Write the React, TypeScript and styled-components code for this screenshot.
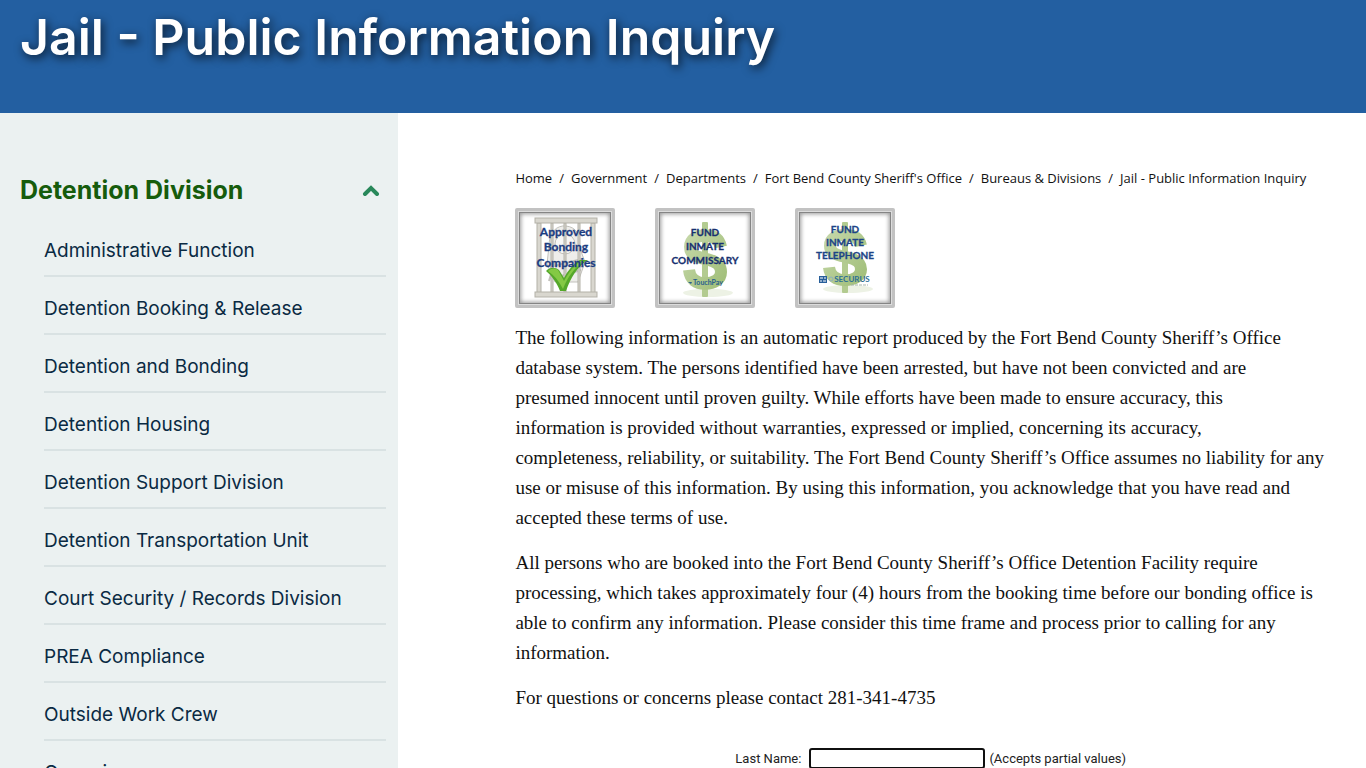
import React, { Fragment, useId } from "react";
import styled, { createGlobalStyle } from "styled-components";

const display = `Inter, "Open Sans", sans-serif`;

const GlobalStyle = createGlobalStyle`
  * { box-sizing: border-box; }
  html { scrollbar-width: none; }
  body { margin: 0; background: #fff; color: #111; font-family: ${display}; }
`;

const Banner = styled.header`
  background: #235fa1;
  padding: 0 20px 39px;
`;

const Title = styled.h1`
  margin: 0;
  color: #fff;
  font-size: 50px;
  line-height: 74px;
  font-weight: 600;
  text-shadow: 2px 3px 10px rgba(0, 0, 0, 0.75);
`;

const Columns = styled.div`
  display: grid;
  grid-template-columns: minmax(0, 7fr) minmax(0, 17fr);
`;

const Sidebar = styled.nav`
  background: #ebf1f1;
  padding: 60px 12px 40px 20px;
`;

const Toggle = styled.button`
  display: flex;
  width: 100%;
  justify-content: space-between;
  align-items: center;
  padding: 0 6px 0 0;
  border: 0;
  background: none;
  color: #165c0c;
  font: 700 25px/34px ${display};
  text-align: left;
`;

const NavList = styled.ul`
  list-style: none;
  margin: 12px 0 0;
  padding: 0 0 0 24px;
`;

const NavItem = styled.li`
  padding: 17px 0 9px;
  border-bottom: 2px solid #d9e2e3;
`;

const NavLink = styled.a`
  display: block;
  color: #0a2a43;
  font-size: 19px;
  line-height: 30px;
  text-decoration: none;
`;

const Main = styled.main`
  padding: 55px 20px 40px 117px;
`;

const Crumbs = styled.ol`
  display: flex;
  flex-wrap: wrap;
  list-style: none;
  margin: 0;
  padding: 0;
  font: 13px/20px "Open Sans", sans-serif;
`;

const Crumb = styled.li`
  & + &::before { content: "/"; margin: 0 7px; }
`;

const CrumbLink = styled.a`
  color: #111;
  text-decoration: none;
`;

const Badges = styled.div`
  display: flex;
  gap: 40px;
  margin: 20px 0 15px;
`;

const BadgeLink = styled.a`
  display: block;
  width: 100px;
  height: 100px;
  padding: 2px;
  border: 3px solid #c2c2c2;
  border-radius: 2px;
  background: #dcdcdc;
`;

const BadgeFace = styled.svg`
  display: block;
  width: 90px;
  height: 90px;
  background: #fff;
  outline: 1px solid #858585;
  box-shadow: inset 0 0 4px 1px #999;
  font-family: Lato, sans-serif;
  font-weight: 700;
  text-anchor: middle;
`;

const Copy = styled.p`
  margin: 0 0 15px;
  color: #111;
  font: 19px/30px "Liberation Serif", serif;
`;

const Search = styled.form`
  display: flex;
  justify-content: center;
  align-items: center;
  margin-top: 35px;
  color: #222;
  font: 13px/20px Roboto, sans-serif;
`;

const Field = styled.input`
  width: 176px;
  height: 21px;
  margin: 0 4px 0 8px;
  border: 2px solid #101010;
  border-radius: 3px;
  outline: 0;
  background: #fff;
`;

const navItems = [
  "Administrative Function",
  "Detention Booking & Release",
  "Detention and Bonding",
  "Detention Housing",
  "Detention Support Division",
  "Detention Transportation Unit",
  "Court Security / Records Division",
  "PREA Compliance",
  "Outside Work Crew",
  "Commissary",
];

const crumbs = [
  "Home",
  "Government",
  "Departments",
  "Fort Bend County Sheriff's Office",
  "Bureaus & Divisions",
  "Jail - Public Information Inquiry",
];

const paragraphs = [
  [
    "The following information is an automatic report produced by the Fort Bend County Sheriff’s Office",
    "database system. The persons identified have been arrested, but have not been convicted and are",
    "presumed innocent until proven guilty. While efforts have been made to ensure accuracy, this",
    "information is provided without warranties, expressed or implied, concerning its accuracy,",
    "completeness, reliability, or suitability. The Fort Bend County Sheriff’s Office assumes no liability for any",
    "use or misuse of this information. By using this information, you acknowledge that you have read and",
    "accepted these terms of use.",
  ],
  [
    "All persons who are booked into the Fort Bend County Sheriff’s Office Detention Facility require",
    "processing, which takes approximately four (4) hours from the booking time before our bonding office is",
    "able to confirm any information. Please consider this time frame and process prior to calling for any",
    "information.",
  ],
  ["For questions or concerns please contact 281-341-4735"],
];

function Dollar({ top, bottom }: { top: number; bottom: number }) {
  const id = useId();
  const h = bottom - top;
  return (
    <g transform={`translate(45 ${top}) scale(1 ${h / 72})`}>
      <defs>
        <linearGradient id={id} x1="0" y1="0" x2="1" y2="1">
          <stop offset="0" stopColor="#c3d6a6" />
          <stop offset="1" stopColor="#a3c07c" />
        </linearGradient>
      </defs>
      <ellipse cx="3" cy="68" rx="25" ry="4" fill="#edf2e5" />
      <rect x="-3" y="0" width="6" height="72" rx="1" fill="#b3cb90" />
      <path
        d="M16 24C14 15 7 13 0 13C-9 13-15 17-15 24C-15 33-5 34 3 36C11 38 16 41 16 48C16 55 9 59 0 59C-9 59-15 55-16 46"
        fill="none"
        stroke={`url(#${id})`}
        strokeWidth="12"
      />
    </g>
  );
}

function BondingArt() {
  return (
    <BadgeFace viewBox="0 0 90 90" role="img" aria-label="Approved Bonding Companies">
      <g fill="#eeeeeb" stroke="#c2c1bb">
        <path d="M29 33c0-14 8-21 17-20 10 1 15 9 13 20l6 16-7 20H35l-8-18z" />
        <circle cx="45" cy="31" r="10" fill="#f7f7f5" />
        <path d="M30 54l32-8M31 66l30-9M35 48l-6 20" fill="none" strokeWidth="2" />
      </g>
      <g fill="#d9d7cf" stroke="#b3b1a8">
        <rect x="17" y="10" width="4" height="70" />
        <rect x="31" y="10" width="2" height="70" />
        <rect x="44" y="10" width="2" height="70" />
        <rect x="58" y="10" width="2" height="70" />
        <rect x="71" y="10" width="4" height="70" />
        <rect x="15" y="5" width="62" height="5" />
        <rect x="15" y="79" width="62" height="5" />
      </g>
      <path d="M26 58c4-4 9-4 13-1l5 8c5-9 10-15 16-18h8C57 54 51 64 46 78h-6C37 70 32 63 26 58z" fill="#55a82a" />
      <path d="M28 58c4-3 7-3 10-1l6 11c5-9 10-16 17-20h4C55 54 48 63 43 76 39 68 34 62 28 58z" fill="#84c944" />
      <g fill="#1c3c80" stroke="#1c3c80" strokeWidth=".3" fontSize="12">
        <text x="46" y="23">Approved</text>
        <text x="46" y="38">Bonding</text>
        <text x="46" y="54">Companies</text>
      </g>
    </BadgeFace>
  );
}

function CommissaryArt() {
  return (
    <BadgeFace viewBox="0 0 90 90" role="img" aria-label="Fund Inmate Commissary, TouchPay">
      <Dollar top={9} bottom={84} />
      <g fill="#17306f" stroke="#17306f" strokeWidth=".3" fontSize="10">
        <text x="45" y="23">FUND</text>
        <text x="45" y="37">INMATE</text>
        <text x="45" y="51">COMMISSARY</text>
      </g>
      <text x="48" y="72" fill="#285f8d" fontSize="7">TouchPay</text>
      <path d="M28 69h4l-1 2z" fill="#285f8d" />
    </BadgeFace>
  );
}

function TelephoneArt() {
  return (
    <BadgeFace viewBox="0 0 90 90" role="img" aria-label="Fund Inmate Telephone, Securus">
      <Dollar top={9} bottom={80} />
      <g fill="#1c4487" stroke="#1c4487" strokeWidth=".3" fontSize="10">
        <text x="45" y="20">FUND</text>
        <text x="45" y="33">INMATE</text>
        <text x="45" y="46">TELEPHONE</text>
      </g>
      <rect x="19" y="63" width="8" height="7" fill="#285f9a" />
      <path d="M20 65h3M24 65h2M20 68h2M23 68h3" stroke="#fff" />
      <circle cx="31" cy="66" r="2" fill="none" stroke="#8fb0c0" />
      <text x="52" y="69" fill="#2d6f96" fontSize="8">SECURUS</text>
      <path d="M51 72h17" stroke="#a5b5ab" strokeDasharray="3 1" />
    </BadgeFace>
  );
}

export default function App() {
  return (
    <>
      <GlobalStyle />
      <Banner>
        <Title>Jail - Public Information Inquiry</Title>
      </Banner>
      <Columns>
        <Sidebar aria-label="Detention Division">
          <Toggle type="button" aria-expanded="true">
            Detention Division
            <svg width="18" height="12" viewBox="0 0 18 12" aria-hidden="true">
              <path d="M3 10l6-6 6 6" fill="none" stroke="#28885a" strokeWidth="4" strokeLinecap="round" />
            </svg>
          </Toggle>
          <NavList>
            {navItems.map((item) => (
              <NavItem key={item}>
                <NavLink href="#">{item}</NavLink>
              </NavItem>
            ))}
          </NavList>
        </Sidebar>
        <Main>
          <Crumbs aria-label="Breadcrumb">
            {crumbs.map((crumb) => (
              <Crumb key={crumb}>
                <CrumbLink href="#">{crumb}</CrumbLink>
              </Crumb>
            ))}
          </Crumbs>
          <Badges>
            <BadgeLink href="#"><BondingArt /></BadgeLink>
            <BadgeLink href="#"><CommissaryArt /></BadgeLink>
            <BadgeLink href="#"><TelephoneArt /></BadgeLink>
          </Badges>
          {paragraphs.map((lines) => (
            <Copy key={lines[0]}>
              {lines.map((line, i) => (
                <Fragment key={line}>
                  {i > 0 && <br />}
                  {line}
                </Fragment>
              ))}
            </Copy>
          ))}
          <Search>
            <label htmlFor="last-name">Last Name:</label>
            <Field id="last-name" type="text" />
            <span>(Accepts partial values)</span>
          </Search>
        </Main>
      </Columns>
    </>
  );
}
